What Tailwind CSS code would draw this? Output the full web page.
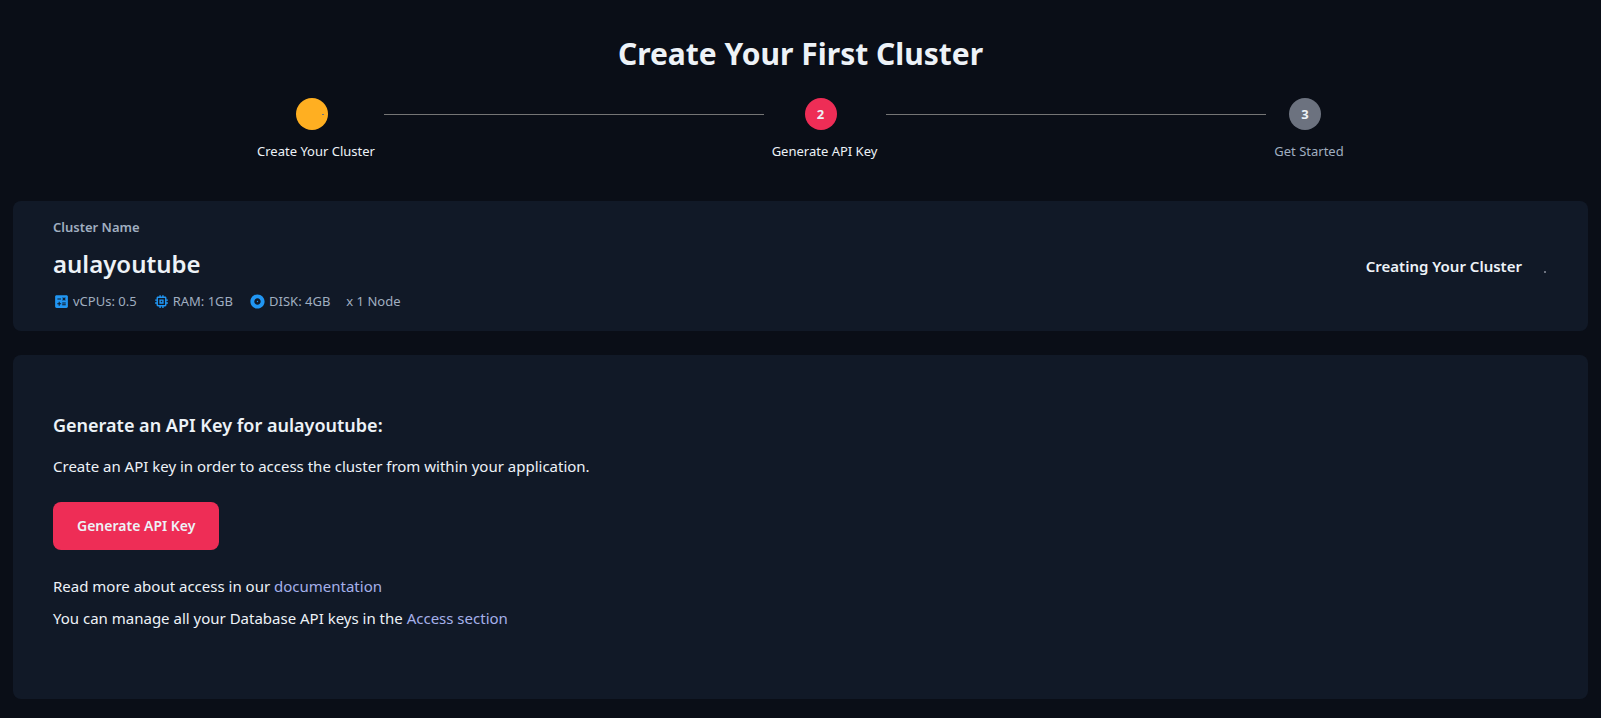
<!DOCTYPE html>
<html lang="en">
<head>
<meta charset="utf-8">
<meta name="viewport" content="width=device-width, initial-scale=1">
<title>Create Your First Cluster</title>
<script src="https://cdn.jsdelivr.net/npm/@tailwindcss/browser@4"></script>
</head>
<body class="min-h-screen bg-[#0a0e17] px-[13px] pt-8 pb-4 font-['Segoe_UI','Noto_Sans',sans-serif] text-[15px] leading-6 text-[#edf2f7]">
<main>
  <h1 class="text-center text-[30px] leading-[44px] font-bold">Create Your First Cluster</h1>

  <ol class="mx-auto mt-[22px] flex max-w-[1104px] items-start text-[13px] leading-5">
    <li class="flex w-[135px] shrink-0 flex-col items-center gap-[11px]">
      <span class="mr-2 flex size-8 items-center justify-end rounded-full bg-[#ffaf21] pr-1"><span class="h-px w-[2px] bg-[#6b7280]"></span></span>
      <span>Create Your Cluster</span>
    </li>
    <li aria-hidden="true" class="mt-4 h-px flex-1 bg-[#757575]"></li>
    <li aria-current="step" class="flex w-[122px] shrink-0 flex-col items-center gap-[11px]">
      <span class="mr-2 flex size-8 items-center justify-center rounded-full bg-[#ee2d56] font-bold">2</span>
      <span>Generate API Key</span>
    </li>
    <li aria-hidden="true" class="mt-4 h-px flex-1 bg-[#757575]"></li>
    <li class="flex w-[87px] shrink-0 flex-col items-center gap-[11px]">
      <span class="mr-2 flex size-8 items-center justify-center rounded-full bg-[#6c727f] font-bold">3</span>
      <span class="text-[#a0aec0]">Get Started</span>
    </li>
  </ol>

  <section class="mt-10 flex items-center justify-between rounded-lg bg-[#111927] px-10 pt-4 pb-5">
    <div>
      <p class="text-[13px] leading-5 font-semibold text-[#a0aec0]">Cluster Name</p>
      <h2 class="mt-[9px] text-[24px] leading-9 font-semibold">aulayoutube</h2>
      <ul class="mt-[9px] flex items-center gap-4 text-[13px] leading-5 text-[#a0aec0]">
        <li class="flex items-center gap-[3px]">
          <svg class="size-[17px] fill-[#2196f3]" viewBox="0 0 24 24" aria-hidden="true"><path d="M19 3H5c-1.1 0-2 .9-2 2v14c0 1.1.9 2 2 2h14c1.1 0 2-.9 2-2V5c0-1.1-.9-2-2-2zm-5.97 4.06L14.09 6l1.41 1.41L16.91 6l1.06 1.06-1.41 1.41 1.41 1.41-1.06 1.06-1.41-1.4-1.41 1.41-1.06-1.06 1.41-1.41-1.41-1.42zM6.25 7.72h5v1.5h-5v-1.5zM11.5 16h-2v2H8v-2H6v-1.5h2v-2h1.5v2h2V16zm6.5 1.25h-5v-1.5h5v1.5zm0-2.5h-5v-1.5h5v1.5z"/></svg>
          vCPUs: 0.5
        </li>
        <li class="flex items-center gap-[3px]">
          <svg class="size-[17px] fill-[#2196f3]" viewBox="0 0 24 24" aria-hidden="true"><path d="M15 9H9v6h6V9zm-2 4h-2v-2h2v2zm8-2V9h-2V7c0-1.1-.9-2-2-2h-2V3h-2v2h-2V3H9v2H7c-1.1 0-2 .9-2 2v2H3v2h2v2H3v2h2v2c0 1.1.9 2 2 2h2v2h2v-2h2v2h2v-2h2c1.1 0 2-.9 2-2v-2h2v-2h-2v-2h2zm-4 6H7V7h10v10z"/></svg>
          RAM: 1GB
        </li>
        <li class="flex items-center gap-[3px]">
          <svg class="size-[17px] fill-[#2196f3]" viewBox="0 0 24 24" aria-hidden="true"><path d="M12 2C6.48 2 2 6.48 2 12s4.48 10 10 10 10-4.48 10-10S17.52 2 12 2zm0 14.5c-2.49 0-4.5-2.01-4.5-4.5S9.51 7.5 12 7.5s4.5 2.01 4.5 4.5-2.01 4.5-4.5 4.5zm0-5.5c-.55 0-1 .45-1 1s.45 1 1 1 1-.45 1-1-.45-1-1-1z"/></svg>
          DISK: 4GB
        </li>
        <li>x 1 Node</li>
      </ul>
    </div>
    <div class="flex items-center gap-[22px] pt-1">
      <p class="text-[15px] leading-6 font-semibold">Creating Your Cluster</p>
      <span class="mt-3 mr-[2px] size-[2px] bg-[#6c727f]"></span>
    </div>
  </section>

  <section class="mt-6 rounded-lg bg-[#111927] px-10 pt-[55px] pb-[69px]">
    <h2 class="text-[18px] leading-[30px] font-semibold">Generate an API Key for aulayoutube:</h2>
    <p class="mt-[14px]">Create an API key in order to access the cluster from within your application.</p>
    <button type="button" class="mt-6 block h-12 cursor-pointer rounded-lg bg-[#ee2d56] px-6 text-[14px] leading-6 font-semibold">Generate API Key</button>
    <p class="mt-6">Read more about access in our <a href="#" class="text-[#a5b0ea]">documentation</a></p>
    <p class="mt-2">You can manage all your Database API keys in the <a href="#" class="text-[#a5b0ea]">Access section</a></p>
  </section>
</main>
</body>
</html>
